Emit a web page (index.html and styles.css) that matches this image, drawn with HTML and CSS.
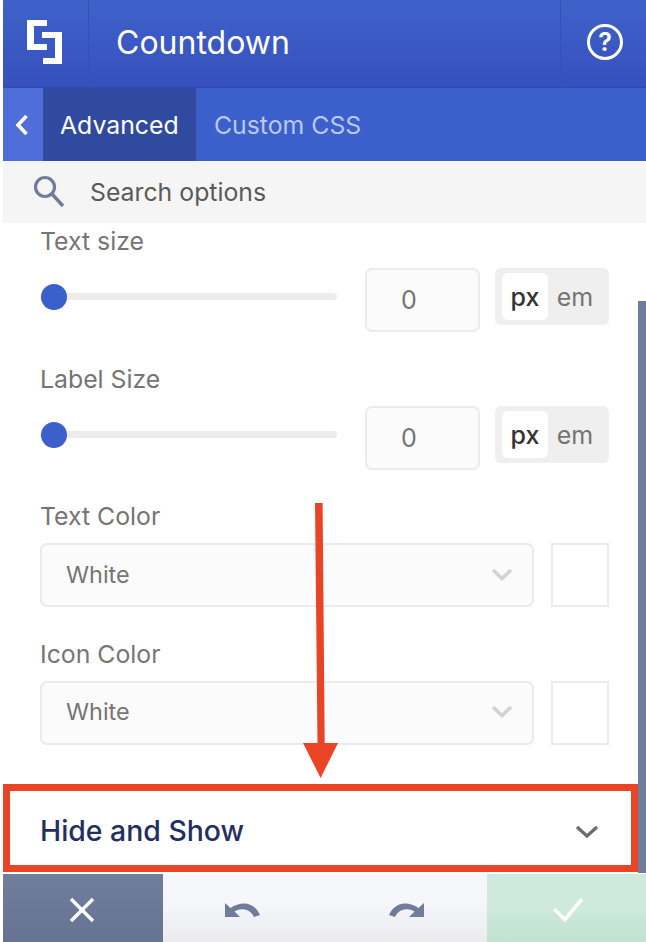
FILE: index.html
```html
<!DOCTYPE html>
<html lang="en">
  <head>
    <meta charset="UTF-8" />
    <title>Countdown</title>
    <link rel="stylesheet" href="styles.css">
  </head>
  <body>
    <div class="panel">
      <header class="header">
        <div class="logo">
          <svg width="36" height="45" viewBox="0 0 36 45">
            <path fill="#fff" d="M0 0H20V6H7V24H20V30H0Z" />
            <path fill="#fff" d="M15 12H35V44H16V38H28V18H15Z" />
          </svg>
        </div>
        <h1 class="title">Countdown</h1>
        <div class="help"><span class="help-ring">?</span></div>
      </header>

      <nav class="tabs">
        <div class="back">
          <svg width="14" height="22" viewBox="0 0 14 22">
            <polyline points="11.5,2 3,11 11.5,20" fill="none" stroke="#fff" stroke-width="3.6" />
          </svg>
        </div>
        <div class="tab active">Advanced</div>
        <div class="tab">Custom CSS</div>
      </nav>

      <div class="search">
        <svg width="34" height="38" viewBox="0 0 34 38">
          <circle cx="13" cy="14" r="9.5" fill="none" stroke="#6f7c9b" stroke-width="3.2" />
          <line x1="20" y1="21" x2="31" y2="33" stroke="#6f7c9b" stroke-width="3.4" />
        </svg>
        <span>Search options</span>
      </div>

      <main class="options">
        <div class="field">
          <label class="label">Text size</label>
          <div class="row">
            <div class="slider"><span class="thumb"></span></div>
            <div class="number">0</div>
            <div class="units"><span class="unit on">px</span><span class="unit">em</span></div>
          </div>
        </div>

        <div class="field">
          <label class="label">Label Size</label>
          <div class="row">
            <div class="slider"><span class="thumb"></span></div>
            <div class="number">0</div>
            <div class="units"><span class="unit on">px</span><span class="unit">em</span></div>
          </div>
        </div>

        <div class="field">
          <label class="label">Text Color</label>
          <div class="row">
            <div class="select">
              <span>White</span>
              <svg width="22" height="13" viewBox="0 0 22 13">
                <polyline points="2,2 11,10.5 20,2" fill="none" stroke="#d2d2d2" stroke-width="3.6" />
              </svg>
            </div>
            <div class="swatch"></div>
          </div>
        </div>

        <div class="field">
          <label class="label">Icon Color</label>
          <div class="row">
            <div class="select">
              <span>White</span>
              <svg width="22" height="13" viewBox="0 0 22 13">
                <polyline points="2,2 11,10.5 20,2" fill="none" stroke="#d2d2d2" stroke-width="3.6" />
              </svg>
            </div>
            <div class="swatch"></div>
          </div>
        </div>

        <svg class="arrow" width="40" height="280" viewBox="0 0 40 280">
          <polygon fill="#ea4426" points="12,0 19.6,0 21.7,240 35,240 17.6,275 0,240 14.5,240" />
        </svg>
      </main>

      <section class="accordion">
        <span>Hide and Show</span>
        <svg class="accordion-icon" width="24" height="16" viewBox="0 0 24 16">
          <polyline points="2,3 12,12 22,3" fill="none" stroke="#6b6b6b" stroke-width="3.2" />
        </svg>
      </section>

      <div class="scrollbar"></div>

      <footer class="footer">
        <div class="btn cancel">
          <svg width="26" height="26" viewBox="0 0 26 26">
            <path d="M2 2L24 24M24 2L2 24" fill="none" stroke="#fff" stroke-width="3.4" />
          </svg>
        </div>
        <div class="btn history undo">
          <svg width="36" height="16" viewBox="0 0 36 16">
            <path fill="#6f7c9b" d="M0 1V15H15L9.5 9.5C13 7.5 16 7 19 7.5C24 8 27 11 29 15L35 13C32 6 26 1.5 19 1.5C14.5 1.5 9.5 3 5.5 6Z" />
          </svg>
        </div>
        <div class="btn history">
          <svg class="flip" width="36" height="16" viewBox="0 0 36 16">
            <path fill="#6f7c9b" d="M0 1V15H15L9.5 9.5C13 7.5 16 7 19 7.5C24 8 27 11 29 15L35 13C32 6 26 1.5 19 1.5C14.5 1.5 9.5 3 5.5 6Z" />
          </svg>
        </div>
        <div class="btn save">
          <svg width="32" height="25" viewBox="0 0 32 25">
            <polyline points="2,12 13,22.5 30,2" fill="none" stroke="#fff" stroke-width="3.6" />
          </svg>
        </div>
      </footer>
    </div>
  </body>
</html>
```

FILE: styles.css
```css
* {
  margin: 0;
  padding: 0;
  box-sizing: border-box;
}
body {
  font-family: "Inter", "Liberation Sans", sans-serif;
  background: #fff;
  height: 942px;
  overflow: hidden;
  padding-left: 3px;
}

.panel {
  position: relative;
  height: 942px;
  display: flex;
  flex-direction: column;
}

.header {
  height: 88px;
  flex: none;
  display: flex;
  align-items: stretch;
  background: linear-gradient(#3f62c9, #3650bd);
  border-bottom: 1px solid #324aaf;
  color: #fff;
}
.logo {
  width: 86px;
  border-right: 1px solid #3550b6;
  padding: 20px 0 0 24px;
}
.title {
  flex: 1;
  font-size: 32px;
  font-weight: 400;
  line-height: 85px;
  padding-left: 27px;
}
.help {
  width: 86px;
  border-left: 1px solid #3550b6;
  display: flex;
  align-items: center;
  justify-content: center;
  padding: 0 0 3px 3px;
}
.help-ring {
  width: 36px;
  height: 36px;
  border: 3px solid #fff;
  border-radius: 50%;
  font-size: 25px;
  font-weight: 600;
  line-height: 30px;
  text-align: center;
}

.tabs {
  height: 73px;
  flex: none;
  display: flex;
  background: #3c60cb;
  color: #b9c8ef;
  font-size: 24.8px;
}
.back {
  width: 40px;
  background: #506ed9;
  display: flex;
  align-items: center;
  justify-content: center;
  padding-right: 3px;
}
.tab {
  padding: 0 18px;
  line-height: 74px;
}
.tab.active {
  width: 153px;
  padding: 0 17px;
  background: #2f4a9f;
  color: #fff;
}

.search {
  height: 62px;
  flex: none;
  display: flex;
  align-items: center;
  gap: 24px;
  padding-left: 29px;
  background: #f5f5f5;
  color: #5a5a5a;
  font-size: 24.8px;
}

.options {
  position: relative;
  flex: 1;
  padding: 4px 37px 0 37px;
  display: flex;
  flex-direction: column;
  gap: 33.5px;
}
.label {
  display: block;
  height: 28px;
  line-height: 28px;
  font-size: 24.8px;
  color: #757575;
  margin-bottom: 13px;
}
.row {
  display: flex;
  align-items: flex-start;
  height: 63px;
}

.slider {
  position: relative;
  width: 297px;
  height: 7px;
  margin-top: 25px;
  margin-right: 28px;
  background: #ececec;
  border-radius: 4px;
}
.thumb {
  position: absolute;
  left: 1px;
  top: -9px;
  width: 26px;
  height: 26px;
  background: #3c60cb;
  border-radius: 50%;
}
.number {
  width: 115px;
  height: 64px;
  border: 2px solid #ebebeb;
  border-radius: 7px;
  background: #fbfbfb;
  color: #757575;
  font-size: 25px;
  line-height: 61px;
  padding-left: 34px;
  margin-right: 15px;
}
.units {
  width: 114px;
  height: 57px;
  padding: 5px 7px;
  display: flex;
  align-items: stretch;
  background: #efefef;
  border-radius: 6px;
  font-size: 25px;
  color: #757575;
}
.unit {
  flex: 1;
  text-align: center;
  line-height: 48px;
}
.unit.on {
  flex: none;
  width: 46px;
  background: #fff;
  color: #333;
  font-weight: 500;
  border-radius: 6px;
}

.select {
  width: 494px;
  height: 64px;
  display: flex;
  align-items: center;
  justify-content: space-between;
  padding: 0 19px 2px 24px;
  border: 2px solid #ebebeb;
  border-radius: 7px;
  background: #fbfbfb;
  color: #757575;
  font-size: 23.4px;
  margin-right: 17px;
}
.swatch {
  width: 58px;
  height: 64px;
  border: 2px solid #ebebeb;
  background: #fff;
}

.scrollbar {
  position: absolute;
  right: 0;
  top: 301px;
  width: 8px;
  height: 572px;
  background: #6f7c9b;
}
.arrow {
  position: absolute;
  left: 300px;
  top: 280px;
}

.accordion {
  height: 88px;
  flex: none;
  margin-right: 8px;
  display: flex;
  align-items: center;
  justify-content: space-between;
  padding: 5px 32px 0 30px;
  border: 7px solid #ea4426;
  color: #232f63;
  font-size: 28.4px;
  font-weight: 500;
}
.accordion-icon {
  margin-top: 2px;
}

.footer {
  height: 68px;
  flex: none;
  display: flex;
  margin-top: 2px;
}
.btn {
  display: flex;
  align-items: center;
  justify-content: center;
  padding-top: 3px;
}
.cancel {
  width: 160px;
  padding-right: 2px;
  background: linear-gradient(#707d9c, #667392);
}
.history {
  width: 162px;
  background: linear-gradient(#f5f7fb 40%, #ebebee);
}
.undo {
  padding-right: 3px;
}
.save {
  flex: 1;
  padding-left: 2px;
  background: linear-gradient(#cdeadc 50%, #c1e1d1);
}
.flip {
  transform: scaleX(-1);
}
```
